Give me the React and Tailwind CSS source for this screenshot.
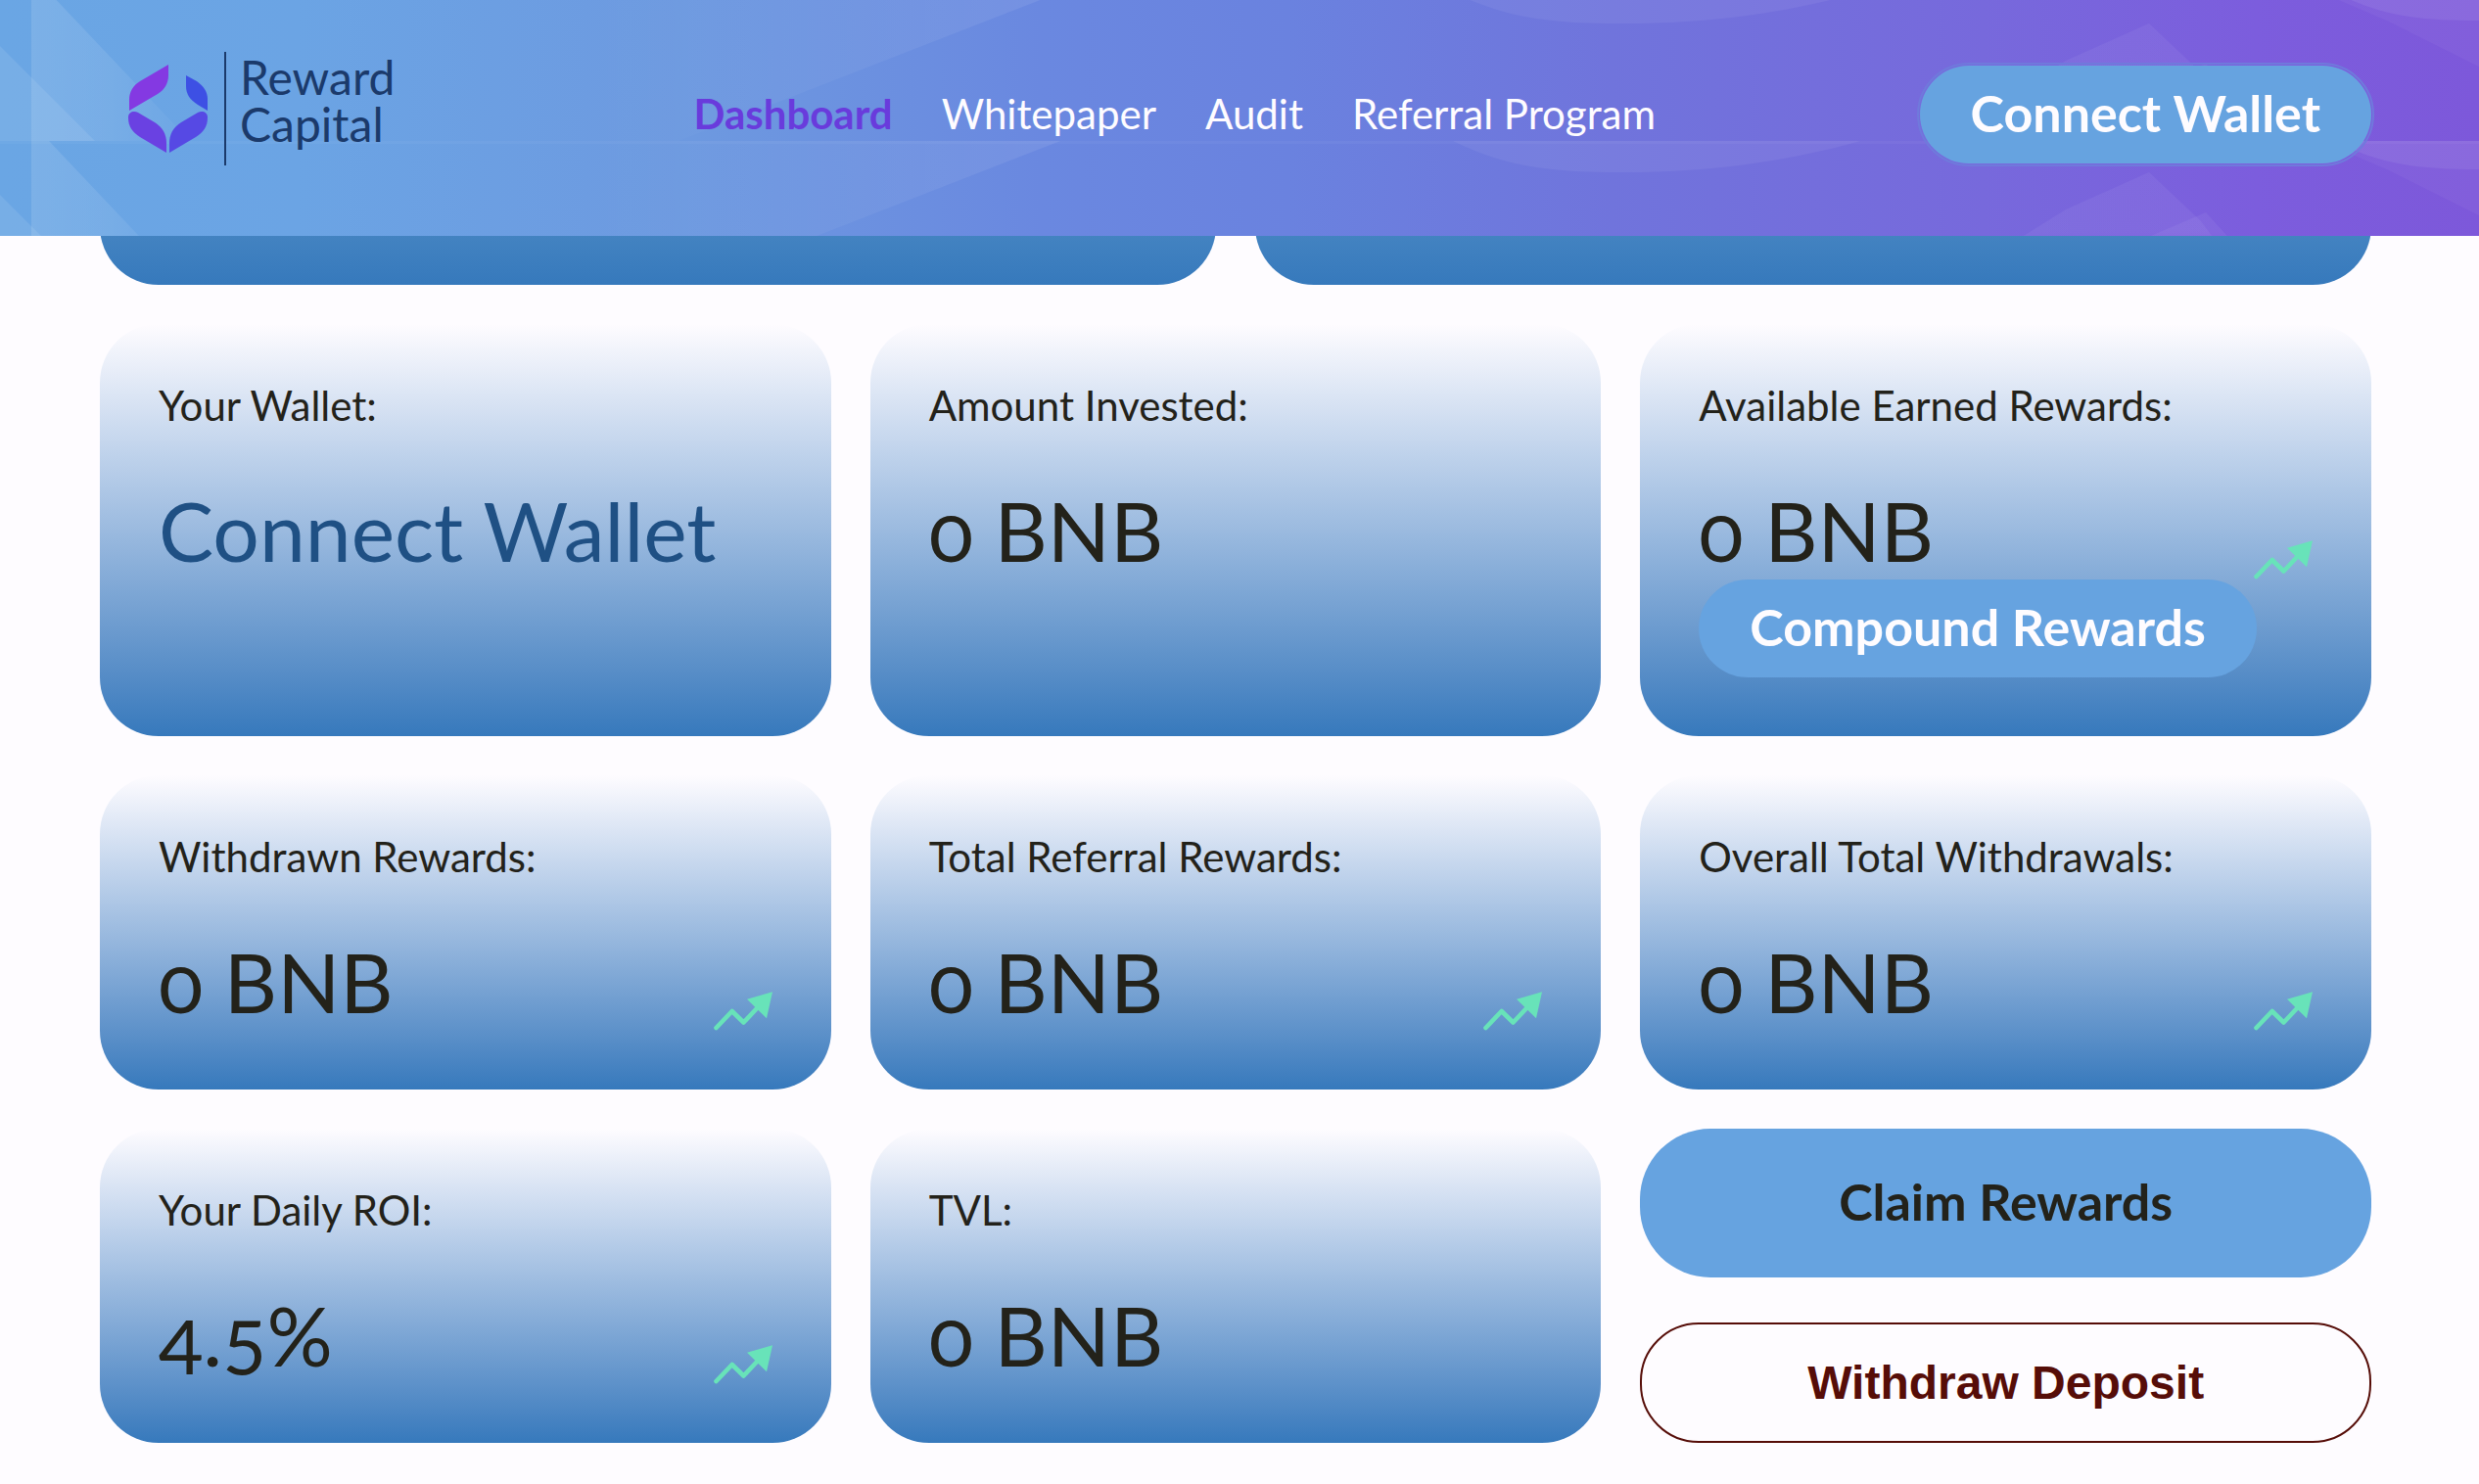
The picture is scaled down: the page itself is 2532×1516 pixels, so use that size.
import React from "react";

const navLinks = [
  { key: "dashboard", label: "Dashboard" },
  { key: "whitepaper", label: "Whitepaper" },
  { key: "audit", label: "Audit" },
  { key: "referral", label: "Referral Program" },
];

const stats = [
  { label: "Your Wallet:", value: "Connect Wallet", link: true },
  { label: "Amount Invested:", value: "0 BNB" },
  { label: "Available Earned Rewards:", value: "0 BNB", trend: true, action: "Compound Rewards" },
  { label: "Withdrawn Rewards:", value: "0 BNB", trend: true },
  { label: "Total Referral Rewards:", value: "0 BNB", trend: true },
  { label: "Overall Total Withdrawals:", value: "0 BNB", trend: true },
  { label: "Your Daily ROI:", value: "4.5%", trend: true },
  { label: "TVL:", value: "0 BNB" },
];

function TrendIcon() {
  return (
    <svg width="60" height="40" viewBox="0 0 60 40" fill="none" className="shrink-0" aria-hidden="true">
      <path d="M2.5 37 18.7 20 30.5 31.5 46 15" stroke="#68e3b9" strokeWidth="4.6" strokeLinecap="round" strokeLinejoin="round" />
      <path d="M60 0.3 34 7.7 54 27.3Z" fill="#68e3b9" />
    </svg>
  );
}

function LogoMark() {
  return (
    <svg width="81" height="90" viewBox="0 0 81 90" className="shrink-0" aria-hidden="true">
      <path d="M41 0V11C41 19 37 26 30 30L1 47V36C1 28 5 21 12 17Z" fill="#8439e2" />
      <path d="M59 11 70 17C77 22 81 28 81 35V47L71 41C63 36 59 30 59 22Z" fill="#3d50e4" />
      <path d="M0 54C0 48 6 47 10 49L27 59C35 64 39 71 39 80V90L12 74C4 69 0 63 0 54Z" fill="#6a41e2" />
      <path d="M81 54C81 48 75 47 71 49L54 59C46 64 42 71 42 80V90L69 74C77 69 81 63 81 54Z" fill="#5649e4" />
    </svg>
  );
}

// one tile of the header artwork, 152px tall
function HeaderTile({ y }) {
  return (
    <g transform={`translate(0 ${y})`} fill="#fff">
      <path d="M32 0H50L194 152H32Z" fill="url(#leftFade)" />
      <path d="M0 55 97 152H0Z" fillOpacity="0.09" />
      <path d="M400 0H1083L693 152H400Z" fill="url(#midFade)" />
      <path d="M1484 0C1540 28 1590 32 1660 32 1750 32 1830 20 1900 0Z" fillOpacity="0.06" />
      <path d="M2195 32 2110 70 2030 120 2010 152H2300L2248 82Z" fill="url(#peakFade)" />
      <path d="M2253 73 2190 100 2150 125H2300Z" fill="url(#peakFade)" />
      <path d="M2385 0C2430 24 2470 29 2532 29V0Z" fillOpacity="0.07" />
      <path d="M2370 0 2440 30 2532 76V0Z" fillOpacity="0.04" />
      <path d="M0 0H2532V3H0Z" fillOpacity="0.04" />
    </g>
  );
}

function HeaderArt() {
  return (
    <svg className="absolute inset-0 h-full w-full" viewBox="0 0 2532 241" preserveAspectRatio="none" aria-hidden="true">
      <defs>
        <linearGradient id="base">
          <stop offset="0" stopColor="#6aa6e4" />
          <stop offset="0.12" stopColor="#6ba4e4" />
          <stop offset="0.28" stopColor="#6d99e0" />
          <stop offset="0.42" stopColor="#6a88e0" />
          <stop offset="0.52" stopColor="#6a82df" />
          <stop offset="0.65" stopColor="#7074dc" />
          <stop offset="0.8" stopColor="#7769dc" />
          <stop offset="0.91" stopColor="#7c5ddd" />
          <stop offset="1" stopColor="#7d58da" />
        </linearGradient>
        <linearGradient id="leftFade" gradientUnits="userSpaceOnUse" x1="32" y1="0" x2="190" y2="0">
          <stop offset="0" stopColor="#fff" stopOpacity="0.12" />
          <stop offset="0.5" stopColor="#fff" stopOpacity="0.09" />
          <stop offset="1" stopColor="#fff" stopOpacity="0.02" />
        </linearGradient>
        <linearGradient id="midFade" gradientUnits="userSpaceOnUse" x1="600" y1="0" x2="1080" y2="0">
          <stop offset="0" stopColor="#fff" stopOpacity="0" />
          <stop offset="1" stopColor="#fff" stopOpacity="0.08" />
        </linearGradient>
        <linearGradient id="peakFade" gradientUnits="userSpaceOnUse" x1="0" y1="30" x2="0" y2="120">
          <stop offset="0" stopColor="#fff" stopOpacity="0.05" />
          <stop offset="0.7" stopColor="#fff" stopOpacity="0.05" />
          <stop offset="1" stopColor="#fff" stopOpacity="0" />
        </linearGradient>
      </defs>
      <path d="M0 0H2532V241H0Z" fill="url(#base)" />
      <HeaderTile y={-8} />
      <HeaderTile y={144} />
    </svg>
  );
}

function PillButton({ children, className = "" }) {
  return (
    <button
      type="button"
      className={`h-[100px] rounded-full bg-[#66a3e0] px-[52px] pb-1 text-[52px] leading-none font-bold whitespace-nowrap text-[#fefcff] ${className}`}
    >
      {children}
    </button>
  );
}

function Header() {
  return (
    <header className="relative z-10 overflow-hidden">
      <HeaderArt />
      <div className="relative flex items-center justify-between pt-[53px] pr-[110px] pb-[60px] pl-[102px]">
        <a href="#home" className="flex w-[337px] items-center pb-3 pl-[29px] text-[#1b3a6b]">
          <LogoMark />
          <span className="ml-[17px] h-[116px] w-0.5 bg-[#1b3a6b]" />
          <span className="ml-3.5 flex flex-col pb-4 text-[48px] leading-[48px]">
            <span>Reward</span>
            <span>Capital</span>
          </span>
        </a>
        <nav className="flex gap-[50px] pb-0.5 text-[42px] leading-[48px] whitespace-nowrap">
          {navLinks.map(({ key, label }) => (
            <a
              key={key}
              href={`#${key}`}
              className={key === "dashboard" ? "font-bold text-[#693bdc]" : "text-[#fefcff]"}
            >
              {label}
            </a>
          ))}
        </nav>
        <PillButton className="outline-2 outline-offset-1 outline-[#7079dc]">Connect Wallet</PillButton>
      </div>
    </header>
  );
}

function StatCard({ label, value, link, trend, action }) {
  return (
    <section className="rounded-[60px] bg-linear-to-b from-[#fefcff] to-[#3679bc] p-[60px]">
      <h2 className="text-[42px] leading-[47px]">{label}</h2>
      <div className="mt-[54px] flex items-end justify-between">
        <p className="text-[84px] leading-[100px] whitespace-nowrap">
          {link ? <a href="#connect" className="text-[#1f5084]">{value}</a> : value}
        </p>
        {trend && <TrendIcon />}
      </div>
      {action && <PillButton>{action}</PillButton>}
    </section>
  );
}

export default function App() {
  return (
    <div className="min-h-screen bg-[#fefcff] font-['Lato',sans-serif] text-[#23221a] [font-variant-numeric:oldstyle-nums]">
      <Header />
      <main className="pr-[110px] pb-[42px] pl-[102px]">
        {/* bottom edge of the two cards scrolled under the header */}
        <div className="-mt-[70px] grid grid-cols-2 gap-10">
          <div className="h-[120px] rounded-[60px] bg-linear-to-b from-[#4383c1] from-[58%] to-[#3679bc]" />
          <div className="h-[120px] rounded-[60px] bg-linear-to-b from-[#4383c1] from-[58%] to-[#3679bc]" />
        </div>
        <div className="mt-10 grid grid-cols-3 gap-10">
          {stats.map((stat) => (
            <StatCard key={stat.label} {...stat} />
          ))}
          <div className="flex flex-col justify-between">
            <button
              type="button"
              className="h-[152px] rounded-[72px] bg-[#66a3e0] pb-1 text-[52px] leading-none font-bold"
            >
              Claim Rewards
            </button>
            <button
              type="button"
              className="h-[123px] rounded-[60px] border-2 border-[#560d08] font-['Liberation_Sans',Arial,sans-serif] text-[48px] leading-none font-bold text-[#560d08]"
            >
              Withdraw Deposit
            </button>
          </div>
        </div>
      </main>
    </div>
  );
}
